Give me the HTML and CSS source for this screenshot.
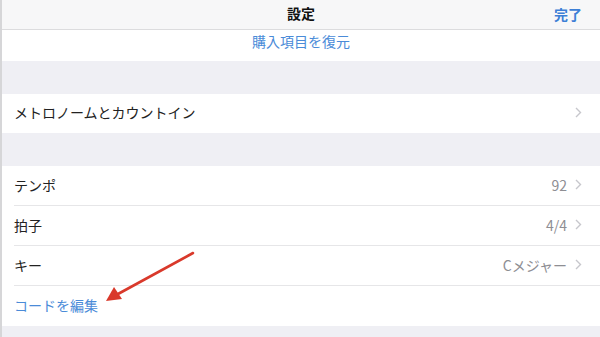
FILE: index.html
```html
<!DOCTYPE html>
<html lang="ja">
<head>
<meta charset="utf-8">
<link rel="stylesheet" href="styles.css">
</head>
<body>
<div class="screen">
  <header class="nav">
    <div class="nav-title">設定</div>
    <div class="nav-done">完了</div>
  </header>
  <div class="row row-center restore"><span class="link">購入項目を復元</span></div>
  <div class="gap"></div>
  <div class="group">
    <div class="row first">
      <span class="label">メトロノームとカウントイン</span>
      <span class="detail"><svg class="chev" viewBox="0 0 7 11" width="7" height="11"><path d="M1 1 L5.5 5.5 L1 10" fill="none" stroke="#c7c7cc" stroke-width="1.4"/></svg></span>
    </div>
  </div>
  <div class="gap"></div>
  <div class="group">
    <div class="row sep">
      <span class="label">テンポ</span>
      <span class="detail"><span class="value">92</span><svg class="chev" viewBox="0 0 7 11" width="7" height="11"><path d="M1 1 L5.5 5.5 L1 10" fill="none" stroke="#c7c7cc" stroke-width="1.4"/></svg></span>
    </div>
    <div class="row sep">
      <span class="label">拍子</span>
      <span class="detail"><span class="value">4/4</span><svg class="chev" viewBox="0 0 7 11" width="7" height="11"><path d="M1 1 L5.5 5.5 L1 10" fill="none" stroke="#c7c7cc" stroke-width="1.4"/></svg></span>
    </div>
    <div class="row sep">
      <span class="label">キー</span>
      <span class="detail"><span class="value">Cメジャー</span><svg class="chev" viewBox="0 0 7 11" width="7" height="11"><path d="M1 1 L5.5 5.5 L1 10" fill="none" stroke="#c7c7cc" stroke-width="1.4"/></svg></span>
    </div>
    <div class="row">
      <span class="link">コードを編集</span>
    </div>
  </div>
  <div class="tail"></div>
  <svg class="arrow" viewBox="0 0 600 337" width="600" height="337">
    <line x1="193" y1="253" x2="118" y2="294" stroke="#d9392b" stroke-width="2.6" stroke-linecap="round"/>
    <polygon points="106,301 114,287 122,299" fill="#d9392b"/>
  </svg>
</div>
</body>
</html>
```
FILE: styles.css
```css
* { box-sizing: border-box; }
html, body { margin: 0; padding: 0; }
body {
  width: 600px;
  height: 337px;
  overflow: hidden;
  font-family: "Noto Sans CJK JP", "Noto Sans", sans-serif;
  background: #efeff4;
}
.screen {
  position: relative;
  width: 600px;
  height: 337px;
  border-left: 2px solid #d6d6d8;
  background: #efeff4;
}
.nav {
  position: relative;
  height: 30px;
  background: #f7f7f8;
  border-bottom: 1px solid #dcdcde;
  display: flex;
  align-items: center;
  justify-content: center;
  padding-bottom: 3px;
}
.nav-title {
  font-size: 14px;
  font-weight: 700;
  color: #111;
}
.nav-done {
  position: absolute;
  right: 18px;
  top: 4px;
  font-size: 14px;
  font-weight: 700;
  color: #3d7fd6;
}
.row {
  height: 40px;
  background: #fff;
  display: flex;
  align-items: center;
  justify-content: space-between;
  padding: 0 18px 3px 12px;
  position: relative;
  font-size: 14px;
  color: #222;
}
.row.first { height: 39px; }
.restore {
  height: 31px;
  justify-content: center;
  padding: 0 0 9px 0;
}
.restore .link { font-size: 14px; }
.link { color: #4a8bd8; }
.sep::after {
  content: "";
  position: absolute;
  left: 12px;
  right: 0;
  bottom: 0;
  height: 1px;
  background: #e6e6e8;
}
.gap { height: 33px; }
.detail {
  display: flex;
  align-items: center;
  gap: 8px;
}
.value { color: #8e8e93; font-size: 14px; }
.chev { display: block; }
.tail { height: 12px; }
.arrow {
  position: absolute;
  left: -2px;
  top: 0;
  pointer-events: none;
}
```
